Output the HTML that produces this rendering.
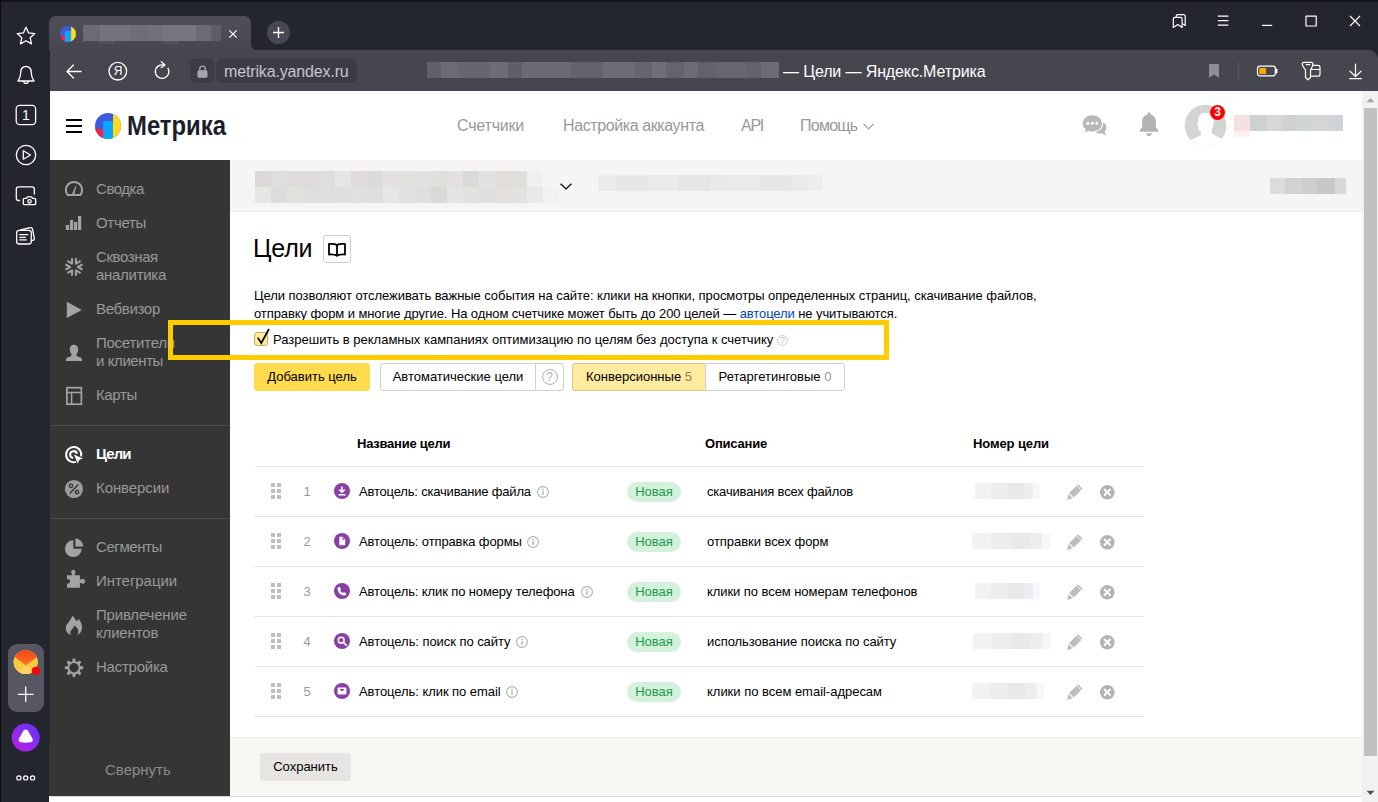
<!DOCTYPE html>
<html lang="ru">
<head>
<meta charset="utf-8">
<title>Цели — Яндекс.Метрика</title>
<style>
*{box-sizing:border-box;margin:0;padding:0}
html,body{width:1378px;height:802px;overflow:hidden;background:#fff}
body{position:relative;font-family:"Liberation Sans",Arial,sans-serif;font-size:13px;color:#000}
.abs{position:absolute}
svg{position:absolute;overflow:visible}
/* browser chrome */
#bside{left:0;top:0;width:50px;height:802px;background:#23252f}
#tabstrip{left:50px;top:0;width:1328px;height:50px;background:#23252f}
#topline{left:0;top:0;width:1378px;height:2px;background:#14151b}
#leftline{left:0;top:0;width:1px;height:802px;background:#0c0c10}
#tab{left:49px;top:16px;width:202px;height:35px;background:linear-gradient(#4f4f59,#46464f);border-radius:7px 7px 0 0}
#urlbar{left:50px;top:50px;width:1328px;height:41px;background:#46464f}
.ubox{background:#555660;border-radius:5px;height:24px;top:59px}
.blur{position:absolute}
/* page */
#header{left:50px;top:91px;width:1312px;height:69px;background:#fff}
#aside{left:50px;top:160px;width:180px;height:636px;background:#353535}
#cbar{left:230px;top:160px;width:1132px;height:52px;background:#f6f5f3;border-bottom:1px solid #efeeec}
#sbar{left:1362px;top:91px;width:16px;height:711px;background:#f1f1f1}
#sthumb{left:1364px;top:108px;width:13px;height:648px;background:#c1c1c1}
.nav{top:116px;font-size:16px;color:#999;white-space:nowrap;line-height:19px}
.mi{left:96px;font-size:15px;color:#999;line-height:18px;white-space:nowrap}
.sep{left:50px;width:180px;height:1px;background:#4d4d4d}
#footer{left:230px;top:737px;width:1132px;height:59px;background:#f8f7f4;border-top:1px solid #ebeae7}
#botline{left:50px;top:796px;width:1312px;height:1px;background:#d8d8d8}
.btn{height:28px;line-height:26px;font-size:13px;border-radius:3px;white-space:nowrap;text-align:center;top:363px}
.th{top:436px;font-weight:bold;font-size:13px;line-height:16px;white-space:nowrap}
.rl{left:254px;width:890px;height:1px;background:#e5e5e5}
.row{left:0;width:1378px;height:50px}
.row .num{left:299px;width:16px;text-align:center;top:18px;line-height:16px;color:#999}
.row .nm{left:359px;top:18px;line-height:16px;white-space:nowrap}
.row .ds{left:707px;top:18px;line-height:16px;white-space:nowrap}
.row .new{left:627px;top:16px;width:54px;height:20px;border-radius:10px;background:#d4f1dc;color:#1d9a4a;text-align:center;line-height:19px}
</style>
</head>
<body>
<!-- ===== browser chrome ===== -->
<div id="bside" class="abs"></div>
<div id="tabstrip" class="abs"></div>
<div id="tab" class="abs"></div>
<div id="urlbar" class="abs"></div>
<div id="topline" class="abs"></div>
<div id="leftline" class="abs"></div>

<!-- left browser sidebar icons -->
<svg style="left:0;top:0" width="50" height="802" viewBox="0 0 50 802" fill="none" stroke="#fff" stroke-width="1.300" stroke-linejoin="round" stroke-linecap="round">
 <!-- star -->
 <path d="M26 27.200l2.600 5.700 6.200.7-4.600 4.200 1.300 6.100-5.500-3.100-5.500 3.100 1.300-6.100-4.600-4.200 6.200-.7z"/>
 <!-- bell -->
 <path d="M26 66.500c3.600 0 5.300 2.800 5.300 6.300 0 4.200 1.200 6.200 2.700 8.200H18c1.500-2 2.700-4 2.700-8.200 0-3.500 1.700-6.300 5.300-6.300z"/>
 <path d="M23.800 81.200a2.200 2.200 0 0 0 4.400 0"/>
 <!-- 1 box -->
 <rect x="16.200" y="105.400" width="19.400" height="19.200" rx="3.500"/>
 <!-- play -->
 <circle cx="26" cy="155" r="9.700"/>
 <path d="M23.300 150.800v8.400l7.200-4.200z"/>
 <!-- screenshot -->
 <path d="M19.500 200.500h-1a2.200 2.200 0 0 1-2.200-2.200v-9.300a2.200 2.200 0 0 1 2.200-2.200h13.600a2.200 2.200 0 0 1 2.200 2.200v5"/>
 <path d="M24.500 198.300h1.900l1-1.500h4.200l1 1.500h1.900a1.200 1.200 0 0 1 1.200 1.200v4a1.200 1.200 0 0 1-1.200 1.200h-10a1.200 1.200 0 0 1-1.200-1.200v-4a1.200 1.200 0 0 1 1.200-1.200z"/>
 <circle cx="29.500" cy="201.300" r="1.700"/>
 <!-- docs -->
 <path d="M20.500 230l9.600-2.400a2 2 0 0 1 2.400 1.500l1.800 9a2 2 0 0 1-1.500 2.300l-1.300.3"/>
 <rect x="16.700" y="230.300" width="14.600" height="13.700" rx="2.500"/>
 <path d="M19.800 234.700h8M19.800 237.300h5.500M19.800 239.900h6.500"/>
</svg>
<div class="abs" style="left:16px;top:107px;width:20px;text-align:center;font-size:14px;line-height:16px;color:#fff">1</div>
<!-- bottom panel -->
<div class="abs" style="left:8px;top:644px;width:36px;height:68px;border-radius:9px;background:#565760"></div>
<svg style="left:0;top:640px" width="50" height="162" viewBox="0 640 50 162">
 <defs>
  <clipPath id="mc"><circle cx="25.700" cy="662" r="12"/></clipPath>
  <linearGradient id="ag" x1="0" y1="1" x2="1" y2="0"><stop offset="0" stop-color="#c11fe0"/><stop offset="1" stop-color="#5a35ff"/></linearGradient>
  <linearGradient id="mg" x1="0" y1="0" x2="0" y2="1"><stop offset="0" stop-color="#f2401f"/><stop offset="1" stop-color="#fb7a1e"/></linearGradient>
 </defs>
 <g clip-path="url(#mc)">
  <rect x="13" y="649" width="26" height="26" fill="#ffd76a"/>
  <path d="M13 649h26v7l-13.300 9.500L13 656z" fill="url(#mg)"/>
  <path d="M13 656v19h26v-19l-13.300 9.500z" fill="#ffc93f"/>
  <path d="M13 675l12.700-9.500 12.700 9.500z" fill="#ffd262"/>
 </g>
 <circle cx="35.800" cy="670.700" r="4" fill="#f00"/>
 <path d="M25.700 686.500v15.600M17.900 694.300h15.600" stroke="#fff" stroke-width="1.300" fill="none"/>
 <circle cx="25.700" cy="737.600" r="14" fill="url(#ag)"/>
 <path d="M25.700 729.600c1.200 0 2 .7 2.700 1.800l4 7.200c.9 1.700.2 3.400-1.800 3.700-3.200.5-6.600.5-9.800 0-2-.3-2.700-2-1.800-3.700l4-7.200c.7-1.100 1.500-1.800 2.700-1.800z" fill="#fff"/>
 <g fill="none" stroke="#fff" stroke-width="1.200"><circle cx="18.900" cy="777.900" r="2.100"/><circle cx="25.700" cy="777.900" r="2.100"/><circle cx="32.600" cy="777.900" r="2.100"/></g>
</svg>
<!-- tab contents -->
<svg style="left:251px;top:44px" width="7" height="7" viewBox="0 0 7 7"><path d="M0 0v7h7A7 7 0 0 1 0 0z" fill="#46464f"/></svg>
<svg style="left:60px;top:26px" width="16" height="16" viewBox="0 0 26 26">
 <defs><clipPath id="lc2"><circle cx="13" cy="13" r="13"/></clipPath></defs>
 <g clip-path="url(#lc2)">
  <rect width="26" height="26" fill="#3b5bdb"/><rect y="16" width="8" height="10" fill="#ff1f44"/>
  <path d="M8 26V10.500A2.500 2.500 0 0 1 10.500 8H18v18z" fill="#0aa5ff"/><rect x="18" width="8" height="26" fill="#ffd91a"/>
 </g>
</svg>
<div class="abs" style="left:83px;top:25px;width:138px;height:16px;background:linear-gradient(90deg,#6b6b75 0 12%,#74747e 12% 35%,#6e6e78 35% 47%,#71717b 47% 58%,#767680 58% 82%,#6c6c76 82% 93%,#5e5e68 93%)"></div>
<div class="abs" style="left:99px;top:41px;width:16px;height:3px;background:#52525c"></div>
<div class="abs" style="left:163px;top:41px;width:16px;height:3px;background:#52525c"></div>
<svg style="left:229px;top:30px" width="8" height="8" viewBox="0 0 8 8"><path d="M0.300 0.300l7.400 7.400M7.700 0.300L0.300 7.700" stroke="#fff" stroke-width="1.200"/></svg>
<div class="abs" style="left:267px;top:21px;width:23px;height:23px;border-radius:12px;background:#474853"></div>
<svg style="left:272px;top:26px" width="13" height="13" viewBox="0 0 13 13"><path d="M6.500 1v11M1 6.500h11" stroke="#fff" stroke-width="1.400"/></svg>
<!-- window controls -->
<svg style="left:1170px;top:12px" width="200" height="20" viewBox="1170 12 200 20" fill="none" stroke="#fff" stroke-width="1.200" stroke-linejoin="round">
 <path d="M1176.200 17.500v-1.200a1.600 1.600 0 0 1 1.600-1.600h5.800a1.600 1.600 0 0 1 1.600 1.600v9.200l-2.200-1.500"/>
 <path d="M1173.300 27.500v-8.600a1.600 1.600 0 0 1 1.600-1.600h5.600a1.600 1.600 0 0 1 1.600 1.600v8.600l-4.400-3z"/>
 <path d="M1217.800 16.200h10.600M1217.800 20.700h10.600M1217.800 25.200h10.600"/>
 <path d="M1262 25.400h10.200"/>
 <rect x="1306" y="16.200" width="10.200" height="9.800"/>
 <path d="M1350 16l10 10M1360 16l-10 10"/>
</svg>
<!-- url bar -->
<svg style="left:1369px;top:50px" width="9" height="9" viewBox="0 0 9 9"><path d="M0 0h9v9A9 9 0 0 0 0 0z" fill="#23252f"/></svg>
<svg style="left:60px;top:60px" width="120" height="24" viewBox="60 60 120 24" fill="none" stroke="#fff" stroke-width="1.300" stroke-linecap="round" stroke-linejoin="round">
 <path d="M81 71.500H67.200M73.500 65l-6.500 6.500 6.500 6.500"/>
 <circle cx="117.800" cy="71.200" r="8.800"/>
 <path d="M168 68.200a6.800 6.800 0 1 1-3.400-2.900M161.300 61.800l3.600 3.300-3.700 2.400"/>
</svg>
<div class="abs" style="left:109px;top:63px;width:18px;text-align:center;font-size:12px;line-height:16px;color:#fff">Я</div>
<div class="abs ubox" style="left:190px;width:24px;background:#3b3c45"></div>
<div class="abs ubox" style="left:216px;width:141px;background:#3b3c45"></div>
<svg style="left:196.500px;top:65px" width="11" height="13" viewBox="0 0 11 13"><path d="M2.800 6V3.800a2.700 2.700 0 0 1 5.400 0V6" fill="none" stroke="#a5a5ad" stroke-width="1.400"/><rect x="0.500" y="5.300" width="10" height="7.400" rx="1.500" fill="#a5a5ad"/></svg>
<div class="abs" id="urltxt" style="left:224px;top:62px;font-size:16px;line-height:20px;color:#c6c6cc;white-space:nowrap;letter-spacing:-0.151px">metrika.yandex.ru</div>
<div class="abs" style="left:427px;top:62px;width:352px;height:16px;background:linear-gradient(90deg,#61616b 0 4%,#6b6b75 4% 9%,#666670 9% 18%,#6d6d77 18% 23%,#5f5f69 23% 27%,#6a6a74 27% 41%,#63636d 41% 50%,#6c6c76 50% 59%,#65656f 59% 64%,#6e6e78 64% 68%,#64646e 68% 73%,#6b6b75 73% 77%,#62626c 77% 82%,#67676f 82% 91%,#62626c 91% 95%,#6b6b75 95%)"></div>
<div class="abs" id="ttl" style="left:783px;top:62px;font-size:16px;line-height:20px;color:#fff;white-space:nowrap;letter-spacing:-0.124px">— Цели — Яндекс.Метрика</div>
<svg style="left:1205px;top:60px" width="165" height="24" viewBox="1205 60 165 24" fill="none" stroke="#fff" stroke-width="1.200" stroke-linejoin="round" stroke-linecap="round">
 <path d="M1209 64.800a.8.800 0 0 1 .8-.8h8.400a.8.800 0 0 1 .8.800v13l-5-3.300-5 3.300z" fill="#8e8e96" stroke="none"/>
 <path d="M1238.500 63v16" stroke="#5f5f69" stroke-width="1"/>
 <rect x="1257.500" y="66.200" width="17.800" height="9.600" rx="2.200"/>
 <rect x="1259.300" y="68" width="6.800" height="6" fill="#ffa500" stroke="none"/>
 <path d="M1276 69v4h1.300v-4z" fill="#fff" stroke="none"/><path d="M1276.300 69.300v3.400" stroke-width="1.800"/>
 <path d="M1303.700 62.300h7.700a1.500 1.500 0 0 1 1.500 1.500c0 3-1.800 4.800-2.400 6.500v7.200l-2.500 2.300-2.500-2.300v-7.200c-.6-1.700-3.300-3.500-3.300-6.500a1.500 1.500 0 0 1 1.500-1.500zM1306.200 64.600h3.600"/>
 <path d="M1313 65.400h5a2 2 0 0 1 2 2v6.800a2 2 0 0 1-2 2h-7.200M1311.500 69.500h8.500"/>
 <path d="M1355.500 64.200v12M1350 71.200l5.500 5.300 5.500-5.300M1349.600 78.600h11.800"/>
</svg>


<!-- ===== page ===== -->
<div id="header" class="abs"></div>

<!-- hamburger -->
<div class="abs" style="left:66px;top:119px;width:16px;height:2px;background:#000"></div>
<div class="abs" style="left:66px;top:125px;width:16px;height:2px;background:#000"></div>
<div class="abs" style="left:66px;top:131px;width:16px;height:2px;background:#000"></div>
<!-- logo -->
<svg style="left:95px;top:113px" width="26" height="26" viewBox="0 0 26 26">
 <defs><clipPath id="lc"><circle cx="13" cy="13" r="13"/></clipPath></defs>
 <g clip-path="url(#lc)">
  <rect x="0" y="0" width="26" height="26" fill="#3b5bdb"/>
  <rect x="0" y="16" width="8" height="10" fill="#ff1f44"/>
  <path d="M8 26V10.5a2.5 2.5 0 0 1 2.500-2.500H18V26z" fill="#0aa5ff"/>
  <rect x="18" y="0" width="8" height="26" fill="#ffd91a"/>
 </g>
</svg>
<div class="abs" id="wm" style="left:126.600px;top:109px;font-size:27px;line-height:34px;font-weight:bold;color:#1a1d2b;white-space:nowrap;transform:scaleX(0.884);transform-origin:0 0">Метрика</div>
<!-- nav -->
<div class="abs nav" style="left:457px;letter-spacing:-0.191px">Счетчики</div>
<div class="abs nav" style="left:563px;letter-spacing:-0.398px">Настройка аккаунта</div>
<div class="abs nav" style="left:741px;letter-spacing:-1.266px">API</div>
<div class="abs nav" style="left:800px;letter-spacing:-0.733px">Помощь</div>
<svg style="left:863px;top:123px" width="11" height="7" viewBox="0 0 11 7"><path d="M0.500 0.800L5.500 5.800L10.500 0.800" fill="none" stroke="#999" stroke-width="1.200"/></svg>
<!-- chat icon -->
<svg style="left:1082px;top:114px" width="25" height="23" viewBox="0 0 25 23">
 <path d="M17.500 7.200c3.800 0 6.900 2.800 6.900 6.300 0 1.600-.7 3.100-1.800 4.200l1.500 3.900-4.100-2.400c-.8.300-1.600.4-2.500.4-3.800 0-6.900-2.700-6.900-6.100s3.100-6.300 6.900-6.300z" fill="#b7b7b7"/>
 <path d="M10.300 .7c5.700 0 10.300 3.900 10.300 8.700s-4.600 8.700-10.300 8.700c-1.400 0-2.800-.2-4-.7L1.400 19.800l1.800-4.300C1.200 13.900 0 11.800 0 9.400 0 4.600 4.600 .7 10.300 .7z" fill="#b7b7b7" stroke="#fff" stroke-width="1.100"/>
 <circle cx="5.800" cy="9.300" r="1.500" fill="#fff"/><circle cx="10.300" cy="9.300" r="1.500" fill="#fff"/><circle cx="14.800" cy="9.300" r="1.500" fill="#fff"/>
</svg>
<!-- bell -->
<svg style="left:1139px;top:112px" width="20" height="25" viewBox="0 0 20 25">
 <path d="M10 0.500c.9 0 1.600.7 1.600 1.600v.5c3.200.8 5.300 3.600 5.300 7v5.600l2.300 3.300v1.300H.8v-1.300l2.300-3.300V9.600c0-3.400 2.100-6.200 5.300-7v-.5C8.400 1.200 9.100.500 10 .500z" fill="#b3b3b3"/>
 <path d="M7.300 21.300h5.400a2.700 2.700 0 0 1-5.400 0z" fill="#b3b3b3"/>
</svg>
<!-- avatar -->
<svg style="left:1183.500px;top:104.300px" width="43" height="43" viewBox="0 0 43 43">
 <defs><clipPath id="ac"><circle cx="21.500" cy="21.500" r="20.800"/></clipPath></defs>
 <circle cx="21.500" cy="21.500" r="20.800" fill="#d4d4d4"/>
 <g clip-path="url(#ac)">
  <path d="M20.800 8.800C17 8.800 14.600 11.500 14.600 14.600L14 17.500 12.800 20.800l1.500.7v2.500c0 2 .7 2.800 2.200 2.800l.8 3.900C14 33.500 8 34.500 4.700 37v6h34.100v-7.700c-3.800-2.300-8.800-3.800-11.100-6.300v-2.900c1.300-3.100 2.100-6.100 1.900-9.200C29.400 12 25.500 8.800 20.800 8.800z" fill="#fff"/>
 </g>
</svg>
<div class="abs" style="left:1210px;top:105px;width:15px;height:15px;border-radius:8px;background:#f00;color:#fff;font-size:12px;font-weight:bold;line-height:15px;text-align:center">3</div>
<!-- blurred name -->
<div class="abs" style="left:1234px;top:115px;width:16px;height:16px;background:#f6e0e0"></div>
<div class="abs" style="left:1234px;top:131px;width:16px;height:6px;background:#fdf1f1"></div>
<div class="abs" style="left:1250px;top:115px;width:93px;height:16px;background:linear-gradient(90deg,#cdd2ce 0 17%,#d6d7d7 17% 34%,#d2d0d0 34% 51%,#d0d5d6 51% 68%,#d3d5d6 68% 85%,#d0d3d7 85%)"></div>

<div id="aside" class="abs"></div>

<svg style="left:50px;top:160px" width="180" height="636" viewBox="50 160 180 636">
 <g fill="none" stroke="#a3a3a3" stroke-width="1.700">
  <!-- gauge -->
  <path d="M67.600 195a8.100 8.100 0 1 1 12.800 0z" stroke-width="2" stroke-linejoin="round"/>
 </g>
 <path d="M71.800 194.600l3.900-8.900.7.200-2.200 9.300z" fill="#a3a3a3"/>
 <g fill="#a3a3a3">
  <!-- bars -->
  <rect x="65.900" y="225" width="3.200" height="5"/><rect x="70" y="220" width="3.200" height="10"/><rect x="74" y="222" width="3.200" height="8"/><rect x="78" y="216" width="3.200" height="14"/>
  <!-- play -->
  <path d="M66.800 301.800L81.800 310l-15 8.100z"/>
  <!-- person -->
  <path d="M74 344.800c2.600 0 4.200 2 4.200 4.800 0 1.900-.7 3.500-1.600 4.500-.3.400-.3.900 0 1.300.6.900 1.700 1.300 3 1.700 1.800.6 2.500 1.700 2.500 3.300v.7H65.900v-.7c0-1.600.7-2.700 2.500-3.300 1.300-.4 2.400-.8 3-1.700.3-.4.300-.9 0-1.300-.9-1-1.600-2.600-1.600-4.500 0-2.800 1.600-4.800 4.200-4.800z"/>
  <!-- conversions -->
  <circle cx="74" cy="489" r="9.100" fill="#9c9c9c"/>
  <!-- pie -->
  <path d="M73.300 540.300v8.400h8.400a8.400 8.400 0 1 1-8.400-8.400z"/>
  <path d="M75.400 538.600a7.800 7.800 0 0 1 7.800 7.800h-7.800z"/>
  <!-- puzzle -->
  <path d="M67 575.200h4.900v-1.400a2.200 2.200 0 1 1 2.800 0v1.400h5.200v4.400h1.400a2.300 2.300 0 1 1 0 3.400h-1.400v4.800H67v-4.200a2.400 2.400 0 1 0 0-4.600z"/>
  <!-- flame -->
  <path d="M70.300 634.800C67.600 633.700 65.800 631.300 65.800 628.400c0-2.900 1.700-4.900 3.400-7.100 1.400-1.800 2.600-3.500 3-5.500 1.600 1.200 3.100 3 4 5.400 1-.6 1.800-1.400 2.200-2.200 2.200 2.200 3.700 5.300 3.700 8.400 0 3.400-1.800 6.200-5 7.500.8-1.100 1.200-2.300 1.200-3.600 0-1.800-1.100-3.300-2.400-4.800L74 626c-.3 1.300-1.200 2.400-2.100 3.400-.9 1-1.600 2-1.600 3.200 0 .8.200 1.500.6 2.200z"/>
  <!-- gear -->
  <path d="M72.30 661.42 L72.79 658.58 L75.21 658.58 L75.70 661.42 L77.31 662.09 L79.67 660.43 L81.37 662.13 L79.71 664.49 L80.38 666.10 L83.22 666.59 L83.22 669.01 L80.38 669.50 L79.71 671.11 L81.37 673.47 L79.67 675.17 L77.31 673.51 L75.70 674.18 L75.21 677.02 L72.79 677.02 L72.30 674.18 L70.69 673.51 L68.33 675.17 L66.63 673.47 L68.29 671.11 L67.62 669.50 L64.78 669.01 L64.78 666.59 L67.62 666.10 L68.29 664.49 L66.63 662.13 L68.33 660.43 L70.69 662.09Z"/>
 </g>
 <circle cx="74" cy="667.800" r="4.700" fill="#353535"/>
 <!-- burst -->
 <g fill="none" stroke="#a3a3a3" stroke-width="1.700">
  <path d="M82.58 269.70L77.90 267.00L82.58 264.30M80.63 260.92L75.95 263.62L75.95 258.22M72.05 258.22L72.05 263.62L67.37 260.92M65.42 264.30L70.10 267.00L65.42 269.70M67.37 273.08L72.05 270.38L72.05 275.78M75.95 275.78L75.95 270.38L80.63 273.08" stroke-width="2.100" stroke-linejoin="round"/>
  <!-- maps -->
  <rect x="66.900" y="387.700" width="14.500" height="16.500"/>
  <path d="M66.900 392.600h14.500M71.600 392.600v11.600" stroke-width="1.500"/>
 </g>
 <!-- goals (active, white) -->
 <g fill="none" stroke="#fff" stroke-width="2">
  <path d="M76 461.900a7.600 7.600 0 1 1 5.100-5.400"/>
  <path d="M73.100 458.100a3.500 3.500 0 1 1 3.900-4.300"/>
 </g>
 <path d="M73.200 453.700l10.600 4.700-4.300 1.900-1.700 4.500z" fill="#fff" stroke="#353535" stroke-width="0.900" stroke-linejoin="round"/>
 <!-- percent glyph -->
 <g fill="none" stroke="#353535" stroke-width="1.300"><circle cx="71" cy="485.800" r="1.700"/><circle cx="77" cy="492.200" r="1.700"/><path d="M78.300 484.500l-8.600 9"/></g>
</svg>
<div class="abs sep" style="top:425px"></div>
<div class="abs sep" style="top:518px"></div>
<div class="abs mi" style="top:180px;letter-spacing:-0.457px">Сводка</div>
<div class="abs mi" style="top:214px;letter-spacing:-0.293px">Отчеты</div>
<div class="abs mi" style="top:248px;letter-spacing:-0.400px">Сквозная</div>
<div class="abs mi" style="top:266px;letter-spacing:-0.288px">аналитика</div>
<div class="abs mi" style="top:300px;letter-spacing:-0.327px">Вебвизор</div>
<div class="abs mi" style="top:334px;letter-spacing:-0.251px">Посетители</div>
<div class="abs mi" style="top:352px;letter-spacing:-0.410px">и клиенты</div>
<div class="abs mi" style="top:386px;letter-spacing:-0.390px">Карты</div>
<div class="abs mi" style="top:479px;letter-spacing:-0.090px">Конверсии</div>
<div class="abs mi" style="top:538px;letter-spacing:-0.419px">Сегменты</div>
<div class="abs mi" style="top:572px;letter-spacing:-0.053px">Интеграции</div>
<div class="abs mi" style="top:606px;letter-spacing:-0.190px">Привлечение</div>
<div class="abs mi" style="top:624px;letter-spacing:-0.164px">клиентов</div>
<div class="abs mi" style="top:658px;letter-spacing:-0.238px">Настройка</div>
<div class="abs mi" style="top:445px;color:#fff;font-weight:bold;letter-spacing:-0.884px">Цели</div>
<div class="abs mi" style="left:105px;top:761px;color:#8c8c8c">Свернуть</div>

<div class="abs" style="left:49px;top:743px;width:1px;height:53px;background:#353535"></div>
<div class="abs" style="left:49px;top:796px;width:1px;height:6px;background:#fff"></div>
<div id="cbar" class="abs"></div>

<div class="abs" style="left:255px;top:171px;width:288px;height:16px;background:linear-gradient(90deg,#dcdad9 0.00% 5.56%,#dedede 5.56% 11.11%,#dddcdb 11.11% 16.67%,#dddcdb 16.67% 22.22%,#dfdedc 22.22% 27.78%,#e6e6e4 27.78% 33.33%,#dfdcdb 33.33% 38.89%,#dcdbd9 38.89% 44.44%,#e3e2e1 44.44% 50.00%,#e4e2df 50.00% 55.56%,#e2e1e0 55.56% 61.11%,#e1dfdc 61.11% 66.67%,#e2e1df 66.67% 72.22%,#dadad8 72.22% 77.78%,#e3e2e2 77.78% 83.33%,#e1deda 83.33% 88.89%,#dfdedb 88.89% 94.44%,#f1f0ee 94.44% 100.00%)"></div>
<div class="abs" style="left:255px;top:187px;width:304px;height:16px;background:linear-gradient(90deg,#e6e6e3 0.00% 5.26%,#dcdcdc 5.26% 10.53%,#e3e3de 10.53% 15.79%,#dfdedf 15.79% 21.05%,#dedfdc 21.05% 26.32%,#e0dfdd 26.32% 31.58%,#e1e0de 31.58% 36.84%,#dfdeda 36.84% 42.11%,#e6e6e5 42.11% 47.37%,#e2e1e2 47.37% 52.63%,#e1dfde 52.63% 57.89%,#dad9d6 57.89% 63.16%,#e4e4e2 63.16% 68.42%,#e2e3df 68.42% 73.68%,#e0dfdd 73.68% 78.95%,#e3e0dc 78.95% 84.21%,#e3e2df 84.21% 89.47%,#eae9e7 89.47% 94.74%,#f2f1ef 94.74% 100.00%)"></div>
<svg style="left:559.500px;top:182.500px" width="12" height="8" viewBox="0 0 12 8"><path d="M0.600 0.800l5.400 5.200L11.400 .8" fill="none" stroke="#000" stroke-width="1.200"/></svg>
<div class="abs" style="left:598px;top:175px;width:225px;height:16px;background:linear-gradient(90deg,#ecebe9 0 8%,#e8e7e5 8% 22%,#ebeae8 22% 36%,#e6e5e3 36% 50%,#e9e8e6 50% 57%,#ebeae8 57% 72%,#e7e6e4 72% 86%,#ebeae8 86% 93%,#efeeec 93%)"></div>
<div class="abs" style="left:1270px;top:178px;width:76px;height:16px;background:linear-gradient(90deg,#dddcda 0 20%,#d4d3d1 20% 42%,#cfcecc 42% 62%,#c9c7c6 62% 85%,#d9d8d6 85%)"></div>


<div class="abs" id="h1" style="left:253px;top:233px;font-size:25px;line-height:30px;white-space:nowrap;letter-spacing:-0.2px">Цели</div>
<div class="abs" style="left:323px;top:235px;width:28px;height:28px;border:1px solid #cfcfcf;border-radius:3px;background:#fff"></div>
<svg style="left:328px;top:243px" width="18" height="14" viewBox="0 0 18 14"><path d="M9 2.200C7.500 1 5.500 .8 1 1v10.500c4.500-.2 6.500.1 8 1.300 1.500-1.200 3.500-1.500 8-1.300V1c-4.500-.2-6.500 0-8 1.200zM9 2.200v10.600" fill="none" stroke="#000" stroke-width="1.800" stroke-linejoin="round"/></svg>
<div class="abs" id="p1" style="left:254px;top:287px;line-height:17px;white-space:nowrap;letter-spacing:-0.059px">Цели позволяют отслеживать важные события на сайте: клики на кнопки, просмотры определенных страниц, скачивание файлов,</div>
<div class="abs" id="p2" style="left:254px;top:305px;line-height:17px;white-space:nowrap;letter-spacing:-0.089px">отправку форм и многие другие. На одном счетчике может быть до 200 целей — <span style="color:#04b">автоцели</span> не учитываются.</div>
<!-- checkbox -->
<div class="abs" style="left:254px;top:332px;width:14px;height:14px;border:1px solid #c4b25f;border-radius:3px;background:#ffeba0"></div>
<svg style="left:254px;top:326px" width="20" height="22" viewBox="0 0 20 22"><path d="M3.700 11.600l3.600 5.400L15 3" fill="none" stroke="#000" stroke-width="1.700" stroke-linejoin="miter"/></svg>
<div class="abs" id="cbl" style="left:273px;top:332px;line-height:16px;white-space:nowrap">Разрешить в рекламных кампаниях оптимизацию по целям без доступа к счетчику</div>
<div class="abs" style="left:777px;top:335px;width:11px;height:11px;border:1px solid #ccc;border-radius:6px;color:#bbb;font-size:9px;line-height:9px;text-align:center">?</div>
<!-- highlight -->
<div class="abs" style="left:168px;top:320px;width:721px;height:40px;border:5px solid #fc0"></div>
<!-- buttons -->
<div class="abs btn" style="left:254px;width:116px;background:#ffdb4d;line-height:28px">Добавить цель</div>
<div class="abs btn" style="left:380px;width:156px;background:#fff;border:1px solid #cfcfcf;border-radius:3px 0 0 3px">Автоматические цели</div>
<div class="abs btn" style="left:535px;width:29px;background:#fff;border:1px solid #cfcfcf;border-radius:0 3px 3px 0"></div>
<div class="abs" style="left:541.500px;top:369px;width:16px;height:16px;border:1px solid #b0b0b0;border-radius:8px;color:#b0b0b0;font-size:12px;line-height:14px;text-align:center">?</div>
<div class="abs btn" style="left:572px;width:134px;background:#ffeba0;border:1px solid #d9c885;border-radius:3px 0 0 3px">Конверсионные <span style="color:#8f8350">5</span></div>
<div class="abs btn" style="left:705px;width:140px;background:#fff;border:1px solid #cfcfcf;border-radius:0 3px 3px 0">Ретаргетинговые <span style="color:#999">0</span></div>
<!-- table head -->
<div class="abs th" id="th1" style="left:357px;letter-spacing:-0.250px">Название цели</div>
<div class="abs th" id="th2" style="left:705px;letter-spacing:-0.207px">Описание</div>
<div class="abs th" id="th3" style="left:973px;letter-spacing:-0.103px">Номер цели</div>
<div class="abs rl" style="top:466px"></div>
<div class="abs row" style="top:466px">
 <svg style="left:271px;top:17px" width="10" height="16" viewBox="0 0 10 16" fill="#bdbdbd"><rect width="4" height="4"/><rect x="6" width="4" height="4"/><rect y="6" width="4" height="4"/><rect x="6" y="6" width="4" height="4"/><rect y="12" width="4" height="4"/><rect x="6" y="12" width="4" height="4"/></svg>
 <div class="abs num">1</div>
 <svg style="left:334px;top:17px" width="16" height="16" viewBox="0 0 16 16"><circle cx="8" cy="8" r="8" fill="#8840a7"/><path d="M8 3.500v5.500M5.300 6.600L8 9.300l2.700-2.700" fill="none" stroke="#fff" stroke-width="1.500"/><path d="M4.500 11.800h7" stroke="#fff" stroke-width="1.500"/></svg>
 <div class="abs nm" style=";letter-spacing:-0.187px">Автоцель: скачивание файла</div>
 <svg style="left:537.0px;top:20px" width="12" height="12" viewBox="0 0 12 12"><circle cx="6" cy="6" r="5.400" fill="none" stroke="#b0b0b0" stroke-width="1.100"/><path d="M6 5.200v3.500" stroke="#999" stroke-width="1.200"/><circle cx="6" cy="3.500" r=".750" fill="#999"/></svg>
 <div class="abs new" style="">Новая</div>
 <div class="abs ds" style=";letter-spacing:-0.178px">скачивания всех файлов</div>
 <div class="abs" style="left:975px;top:17px;width:65px;height:16px;background:linear-gradient(90deg,#f2f2f2 0 25%,#ededed 25% 50%,#e9e9e9 50% 75%,#eceeef 75% 90%,#f6f7f8 90%)"></div>
 <svg style="left:1065.500px;top:16.500px" width="18" height="18" viewBox="0 0 17 17"><path d="M11.300 1.200l4.300 4.300-8.300 8.300-4.300-4.300z" fill="#bdbdbd"/><path d="M2.300 10.400l4.100 4.100-5.300 1.500z" fill="#bdbdbd"/><path d="M10 2.500l4.300 4.300" stroke="#fff" stroke-width="0.800"/></svg>
 <svg style="left:1099.500px;top:18.500px" width="14.600" height="14.600" viewBox="0 0 14 14"><circle cx="7" cy="7" r="7" fill="#b3b3b3"/><path d="M3.900 3.900l6.200 6.200M10.100 3.900l-6.200 6.200" stroke="#fff" stroke-width="1.900"/></svg>
</div>
<div class="abs rl" style="top:516px"></div>
<div class="abs row" style="top:516px">
 <svg style="left:271px;top:17px" width="10" height="16" viewBox="0 0 10 16" fill="#bdbdbd"><rect width="4" height="4"/><rect x="6" width="4" height="4"/><rect y="6" width="4" height="4"/><rect x="6" y="6" width="4" height="4"/><rect y="12" width="4" height="4"/><rect x="6" y="12" width="4" height="4"/></svg>
 <div class="abs num">2</div>
 <svg style="left:334px;top:17px" width="16" height="16" viewBox="0 0 16 16"><circle cx="8" cy="8" r="8" fill="#8840a7"/><path d="M5.300 3.800h3.500l2.400 2.600v5.800H5.300z" fill="#fff"/><path d="M8.300 4.200v2.600h2.500z" fill="#8840a7"/></svg>
 <div class="abs nm" style=";letter-spacing:-0.120px">Автоцель: отправка формы</div>
 <svg style="left:526.8px;top:20px" width="12" height="12" viewBox="0 0 12 12"><circle cx="6" cy="6" r="5.400" fill="none" stroke="#b0b0b0" stroke-width="1.100"/><path d="M6 5.200v3.500" stroke="#999" stroke-width="1.200"/><circle cx="6" cy="3.500" r=".750" fill="#999"/></svg>
 <div class="abs new" style="">Новая</div>
 <div class="abs ds" style=";letter-spacing:-0.049px">отправки всех форм</div>
 <div class="abs" style="left:972px;top:17px;width:78px;height:16px;background:linear-gradient(90deg,#f2f2f2 0 25%,#ededed 25% 50%,#e9e9e9 50% 75%,#eceeef 75% 90%,#f6f7f8 90%)"></div>
 <svg style="left:1065.500px;top:16.500px" width="18" height="18" viewBox="0 0 17 17"><path d="M11.300 1.200l4.300 4.300-8.300 8.300-4.300-4.300z" fill="#bdbdbd"/><path d="M2.300 10.400l4.100 4.100-5.300 1.500z" fill="#bdbdbd"/><path d="M10 2.500l4.300 4.300" stroke="#fff" stroke-width="0.800"/></svg>
 <svg style="left:1099.500px;top:18.500px" width="14.600" height="14.600" viewBox="0 0 14 14"><circle cx="7" cy="7" r="7" fill="#b3b3b3"/><path d="M3.900 3.900l6.200 6.200M10.100 3.900l-6.200 6.200" stroke="#fff" stroke-width="1.900"/></svg>
</div>
<div class="abs rl" style="top:566px"></div>
<div class="abs row" style="top:566px">
 <svg style="left:271px;top:17px" width="10" height="16" viewBox="0 0 10 16" fill="#bdbdbd"><rect width="4" height="4"/><rect x="6" width="4" height="4"/><rect y="6" width="4" height="4"/><rect x="6" y="6" width="4" height="4"/><rect y="12" width="4" height="4"/><rect x="6" y="12" width="4" height="4"/></svg>
 <div class="abs num">3</div>
 <svg style="left:334px;top:17px" width="16" height="16" viewBox="0 0 16 16"><circle cx="8" cy="8" r="8" fill="#8840a7"/><path d="M5.600 3.700l1.500 2.500-1 1c.6 1.300 1.500 2.200 2.800 2.800l1-1 2.500 1.500c-.2 1.200-1 2-2.200 2-3.700-.3-6.400-3-6.700-6.700 0-1.200.9-2 2.100-2.100z" fill="#fff"/></svg>
 <div class="abs nm" style=";letter-spacing:-0.118px">Автоцель: клик по номеру телефона</div>
 <svg style="left:580.9px;top:20px" width="12" height="12" viewBox="0 0 12 12"><circle cx="6" cy="6" r="5.400" fill="none" stroke="#b0b0b0" stroke-width="1.100"/><path d="M6 5.200v3.500" stroke="#999" stroke-width="1.200"/><circle cx="6" cy="3.500" r=".750" fill="#999"/></svg>
 <div class="abs new" style="">Новая</div>
 <div class="abs ds" style=";letter-spacing:-0.065px">клики по всем номерам телефонов</div>
 <div class="abs" style="left:975px;top:17px;width:65px;height:16px;background:linear-gradient(90deg,#f2f2f2 0 25%,#ededed 25% 50%,#e9e9e9 50% 75%,#eceeef 75% 90%,#f6f7f8 90%)"></div>
 <svg style="left:1065.500px;top:16.500px" width="18" height="18" viewBox="0 0 17 17"><path d="M11.300 1.200l4.300 4.300-8.300 8.300-4.300-4.300z" fill="#bdbdbd"/><path d="M2.300 10.400l4.100 4.100-5.300 1.500z" fill="#bdbdbd"/><path d="M10 2.500l4.300 4.300" stroke="#fff" stroke-width="0.800"/></svg>
 <svg style="left:1099.500px;top:18.500px" width="14.600" height="14.600" viewBox="0 0 14 14"><circle cx="7" cy="7" r="7" fill="#b3b3b3"/><path d="M3.900 3.900l6.200 6.200M10.100 3.900l-6.200 6.200" stroke="#fff" stroke-width="1.900"/></svg>
</div>
<div class="abs rl" style="top:616px"></div>
<div class="abs row" style="top:616px">
 <svg style="left:271px;top:17px" width="10" height="16" viewBox="0 0 10 16" fill="#bdbdbd"><rect width="4" height="4"/><rect x="6" width="4" height="4"/><rect y="6" width="4" height="4"/><rect x="6" y="6" width="4" height="4"/><rect y="12" width="4" height="4"/><rect x="6" y="12" width="4" height="4"/></svg>
 <div class="abs num">4</div>
 <svg style="left:334px;top:17px" width="16" height="16" viewBox="0 0 16 16"><circle cx="8" cy="8" r="8" fill="#8840a7"/><circle cx="7.200" cy="7.200" r="2.900" fill="none" stroke="#fff" stroke-width="1.500"/><path d="M9.400 9.400l2.800 2.800" stroke="#fff" stroke-width="1.700" stroke-linecap="round"/></svg>
 <div class="abs nm" style=";letter-spacing:-0.055px">Автоцель: поиск по сайту</div>
 <svg style="left:515.6px;top:20px" width="12" height="12" viewBox="0 0 12 12"><circle cx="6" cy="6" r="5.400" fill="none" stroke="#b0b0b0" stroke-width="1.100"/><path d="M6 5.200v3.500" stroke="#999" stroke-width="1.200"/><circle cx="6" cy="3.500" r=".750" fill="#999"/></svg>
 <div class="abs new" style="">Новая</div>
 <div class="abs ds" style=";letter-spacing:-0.050px">использование поиска по сайту</div>
 <div class="abs" style="left:973px;top:17px;width:78px;height:16px;background:linear-gradient(90deg,#f2f2f2 0 25%,#ededed 25% 50%,#e9e9e9 50% 75%,#eceeef 75% 90%,#f6f7f8 90%)"></div>
 <svg style="left:1065.500px;top:16.500px" width="18" height="18" viewBox="0 0 17 17"><path d="M11.300 1.200l4.300 4.300-8.300 8.300-4.300-4.300z" fill="#bdbdbd"/><path d="M2.300 10.400l4.100 4.100-5.300 1.500z" fill="#bdbdbd"/><path d="M10 2.500l4.300 4.300" stroke="#fff" stroke-width="0.800"/></svg>
 <svg style="left:1099.500px;top:18.500px" width="14.600" height="14.600" viewBox="0 0 14 14"><circle cx="7" cy="7" r="7" fill="#b3b3b3"/><path d="M3.900 3.900l6.200 6.200M10.100 3.900l-6.200 6.200" stroke="#fff" stroke-width="1.900"/></svg>
</div>
<div class="abs rl" style="top:666px"></div>
<div class="abs row" style="top:666px">
 <svg style="left:271px;top:17px" width="10" height="16" viewBox="0 0 10 16" fill="#bdbdbd"><rect width="4" height="4"/><rect x="6" width="4" height="4"/><rect y="6" width="4" height="4"/><rect x="6" y="6" width="4" height="4"/><rect y="12" width="4" height="4"/><rect x="6" y="12" width="4" height="4"/></svg>
 <div class="abs num">5</div>
 <svg style="left:334px;top:17px" width="16" height="16" viewBox="0 0 16 16"><circle cx="8" cy="8" r="8" fill="#8840a7"/><rect x="3.600" y="4.600" width="8.800" height="6.800" rx="1" fill="#fff"/><path d="M5.300 6.100h5.400L8 8.500z" fill="#8840a7"/></svg>
 <div class="abs nm" style=";letter-spacing:-0.058px">Автоцель: клик по email</div>
 <svg style="left:506.0px;top:20px" width="12" height="12" viewBox="0 0 12 12"><circle cx="6" cy="6" r="5.400" fill="none" stroke="#b0b0b0" stroke-width="1.100"/><path d="M6 5.200v3.500" stroke="#999" stroke-width="1.200"/><circle cx="6" cy="3.500" r=".750" fill="#999"/></svg>
 <div class="abs new" style="">Новая</div>
 <div class="abs ds" style=";letter-spacing:-0.019px">клики по всем email-адресам</div>
 <div class="abs" style="left:972px;top:17px;width:72px;height:16px;background:linear-gradient(90deg,#f2f2f2 0 25%,#ededed 25% 50%,#e9e9e9 50% 75%,#eceeef 75% 90%,#f6f7f8 90%)"></div>
 <svg style="left:1065.500px;top:16.500px" width="18" height="18" viewBox="0 0 17 17"><path d="M11.300 1.200l4.300 4.300-8.300 8.300-4.300-4.300z" fill="#bdbdbd"/><path d="M2.300 10.400l4.100 4.100-5.300 1.500z" fill="#bdbdbd"/><path d="M10 2.500l4.300 4.300" stroke="#fff" stroke-width="0.800"/></svg>
 <svg style="left:1099.500px;top:18.500px" width="14.600" height="14.600" viewBox="0 0 14 14"><circle cx="7" cy="7" r="7" fill="#b3b3b3"/><path d="M3.900 3.900l6.200 6.200M10.100 3.900l-6.200 6.200" stroke="#fff" stroke-width="1.900"/></svg>
</div>
<div class="abs rl" style="top:716px"></div>

<div id="footer" class="abs"></div>

<div class="abs" style="left:260px;top:753px;width:91px;height:28px;border-radius:3px;background:#e6e5e1;text-align:center;line-height:28px;white-space:nowrap">Сохранить</div>

<div id="botline" class="abs"></div>
<div id="sbar" class="abs"></div>
<div id="sthumb" class="abs"></div>

<svg style="left:1366px;top:97px" width="9" height="6" viewBox="0 0 9 6"><path d="M0.500 5.300L4.500 1l4 4.300z" fill="#a3a3a3"/></svg>
<svg style="left:1366px;top:790px" width="9" height="6" viewBox="0 0 9 6"><path d="M0.500 .8L4.500 5 8.500 .8z" fill="#505050"/></svg>

</body>
</html>
